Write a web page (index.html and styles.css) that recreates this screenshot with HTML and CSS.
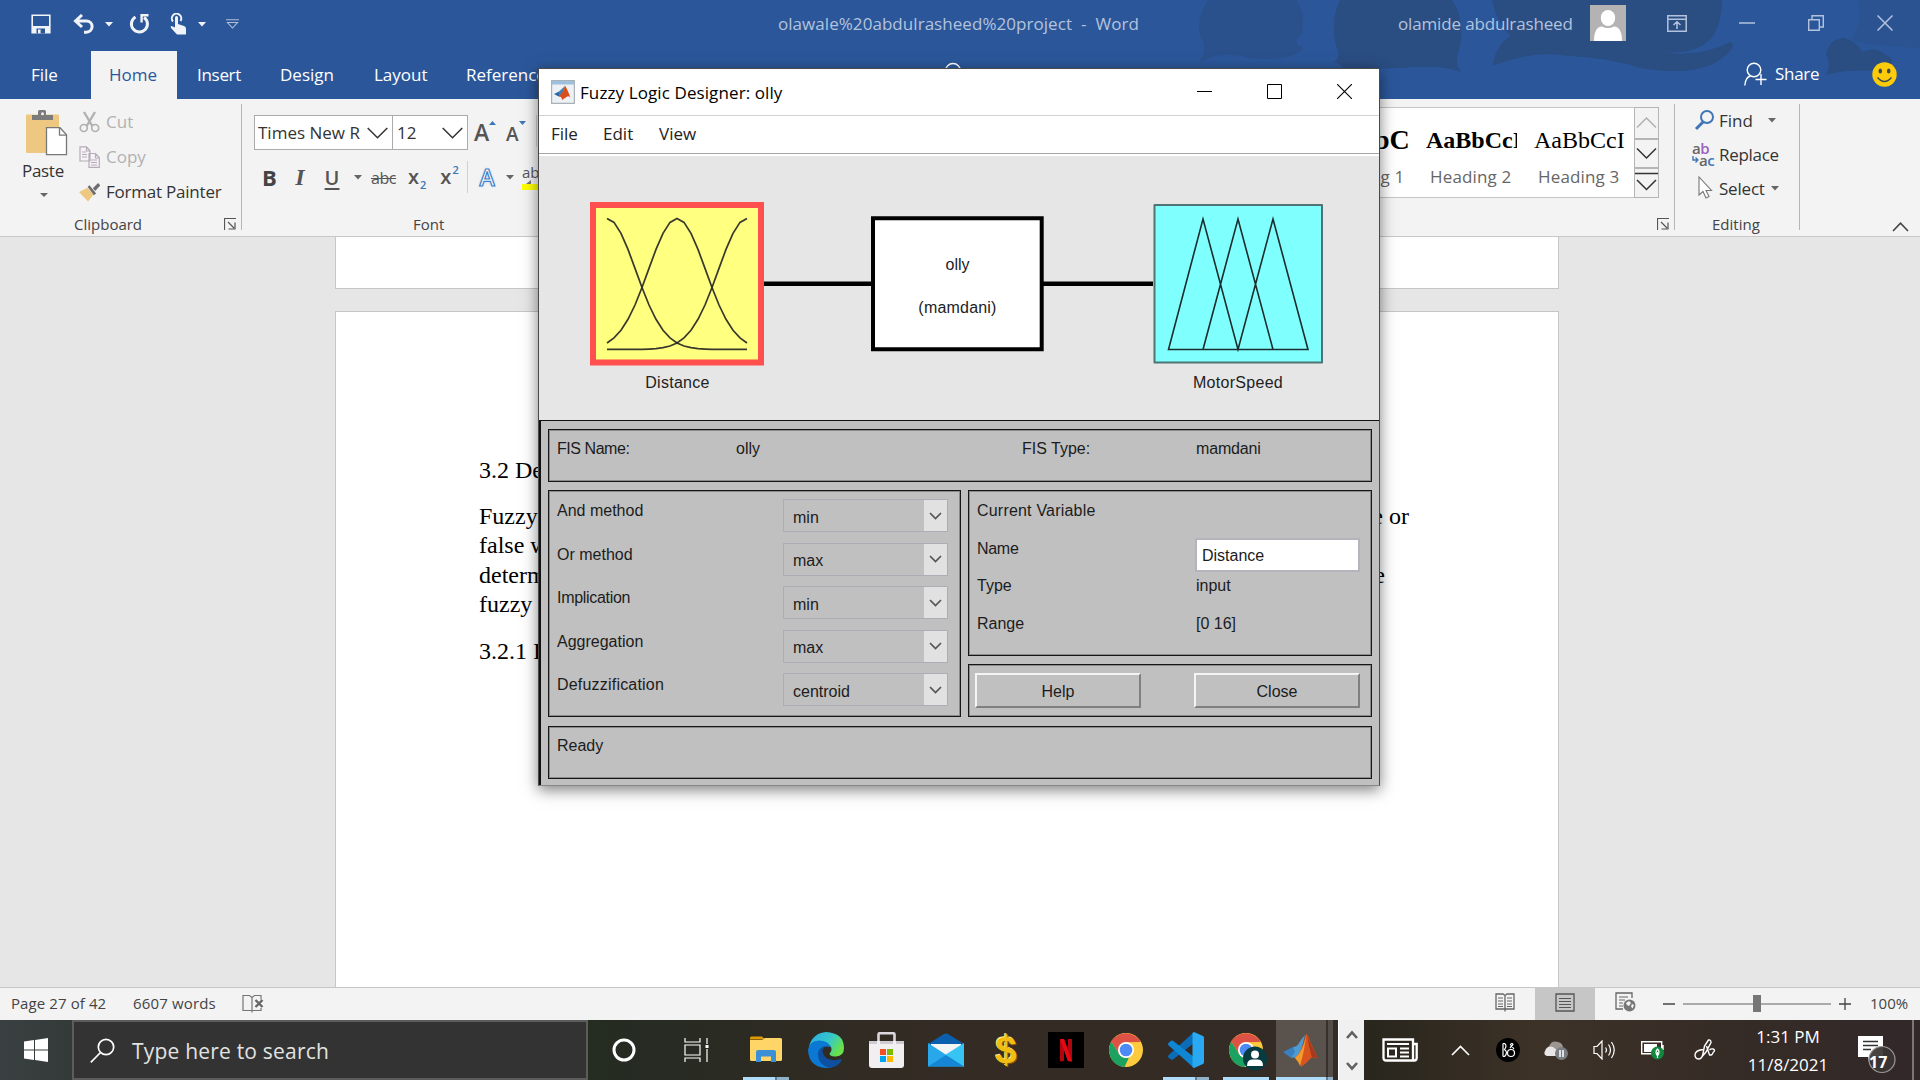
FILE: index.html
```html
<!DOCTYPE html>
<html lang="en">
<head>
<meta charset="utf-8">
<title>olawale%20abdulrasheed%20project - Word</title>
<link rel="stylesheet" href="styles.css">
</head>
<body>
<div class="desktop">

<header class="word-head">
  <svg class="head-art" width="740" height="99" viewBox="1180 0 740 99">
    <g fill="#2a4d82">
      <path d="M1208 0 Q1196 18 1200 36 Q1208 46 1200 62 Q1222 50 1250 58 Q1292 62 1304 48 Q1290 44 1302 34 Q1306 12 1296 0Z" opacity=".55"/>
      <path d="M1340 0 Q1330 20 1336 46 Q1342 56 1334 62 Q1340 62 1346 72 Q1380 68 1400 68 Q1440 64 1461 72 Q1454 62 1459 50 Q1466 20 1452 0Z"/>
      <path d="M1492 0 Q1496 20 1510 36 Q1494 48 1493 66 Q1530 50 1570 56 Q1610 58 1640 68 Q1700 78 1725 56 Q1738 44 1730 42 Q1700 58 1660 52 Q1700 56 1714 34 Q1722 20 1722 0Z"/>
      <path d="M1826 75 Q1832 64 1826 54 Q1830 38 1844 38 Q1858 42 1862 52 Q1876 46 1884 54 Q1900 60 1884 72 Q1850 68 1826 75Z"/>
      <path d="M1858 0 Q1862 30 1850 40 Q1870 46 1920 48 L1920 0Z" opacity=".35"/>
    </g>
  </svg>
  <div class="titlebar">
    <div class="qat">
      <svg width="20" height="20" viewBox="0 0 20 20"><path d="M1.2 1.2h17.6v17.6H1.2z" fill="none" stroke="#f0f3f8" stroke-width="1.6"/><path d="M1 12h18v7H1z" fill="#f0f3f8"/><path d="M5.5 14.5h8.5v5H5.500z" fill="#2b579a"/><path d="M7 15.500h2.600v3.800H7z" fill="#f0f3f8"/></svg>
      <svg class="undo" width="22" height="20" viewBox="0 0 22 20"><path d="M9 1 2.500 7 9 13M3 7h10.500a5.600 5.600 0 0 1 0 11.200H11" fill="none" stroke="#f0f3f8" stroke-width="3"/></svg>
      <svg class="dd" width="8" height="5"><path d="M0 0h8L4 4.500z" fill="#f0f3f8"/></svg>
      <svg class="redo" width="21" height="20" viewBox="0 0 21 20"><path d="M6.500 3A8 8 0 1 0 15 3.400" fill="none" stroke="#f0f3f8" stroke-width="3"/><path d="M12 1.200h7.500M12.600 0v8.500" fill="none" stroke="#f0f3f8" stroke-width="2.400"/></svg>
      <svg class="touch" width="17" height="22" viewBox="0 0 17 22"><path d="M3 8.500A4.700 4.700 0 1 1 10.500 8" fill="none" stroke="#f0f3f8" stroke-width="2"/><path d="M5 4.500q0-1.500 1.500-1.500T8 4.500V11l6 2q2 .6 2 3v5.500H7L1 15q-1-1.500.5-2L5 14.500z" fill="#f0f3f8"/></svg>
      <svg class="dd dd2" width="8" height="5"><path d="M0 0h8L4 4.500z" fill="#f0f3f8"/></svg>
      <svg class="cust" width="13" height="10"><path d="M0 .7h13M1.500 3.500h10L6.500 9z" fill="none" stroke="#aebfda" stroke-width="1.100"/></svg>
    </div>
    <span class="doc-title">olawale%20abdulrasheed%20project &nbsp;-&nbsp; Word</span>
    <div class="account">
      <span class="user-name">olamide abdulrasheed</span>
      <svg class="avatar" width="36" height="36" viewBox="0 0 36 36"><path fill="#b3b3b3" d="M0 0h36v36H0z"/><ellipse cx="18" cy="13" rx="7.200" ry="8" fill="#fff"/><path d="M4 36q0-14 8-14.500 6 3 12 0 8 .5 8 14.500z" fill="#fff"/></svg>
      <svg class="w1" width="20" height="17" viewBox="0 0 20 17"><path d="M.8.8h18.400v15.400H.8zM.8 4.200h18.400M10 14V7M6.500 10 10 6.800l3.500 3.200" fill="none" stroke="#b3c3dd" stroke-width="1.500"/></svg>
      <svg class="w2" width="16" height="2"><path d="M0 1h16" stroke="#b3c3dd" stroke-width="1.500"/></svg>
      <svg class="w3" width="16" height="16" viewBox="0 0 16 16"><path d="M.7 4.700h10.600v10.600H.7zM4 4.500V.7h11.300V12h-3.600" fill="none" stroke="#b3c3dd" stroke-width="1.400"/></svg>
      <svg class="w4" width="16" height="16"><path d="M.5.5l15 15M15.500.5l-15 15" stroke="#b3c3dd" stroke-width="1.500"/></svg>
    </div>
  </div>
  <nav class="tabs">
    <span class="tab t-file">File</span>
    <span class="tab t-home">Home</span>
    <span class="tab t-insert">Insert</span>
    <span class="tab t-design">Design</span>
    <span class="tab t-layout">Layout</span>
    <span class="tab t-ref">References</span>
    <span class="tab t-mail">Mailings</span>
    <span class="tab t-rev">Review</span>
    <span class="tab t-view">View</span>
    <span class="tab t-help">Help</span>
    <svg class="bulb" width="18" height="24"><circle cx="9" cy="9" r="7.500" fill="none" stroke="#fff" stroke-width="1.400"/></svg>
    <span class="tab t-tell">Tell me what you want to do</span>
    <div class="share">
      <svg width="23" height="24" viewBox="0 0 23 24"><circle cx="10" cy="8" r="6.800" fill="none" stroke="#fff" stroke-width="1.400"/><path d="M.8 23.500Q1.500 15 6.500 14M17 12v11M11.500 17.500h11" fill="none" stroke="#fff" stroke-width="1.400"/></svg>
      <span class="share-label">Share</span>
      <svg class="smile" width="25" height="25" viewBox="0 0 25 25"><circle cx="12.500" cy="12.500" r="12.200" fill="#fccc0a"/><ellipse cx="8.300" cy="9" rx="1.800" ry="2.500" fill="#3c4a50"/><ellipse cx="16.700" cy="9" rx="1.800" ry="2.500" fill="#3c4a50"/><path d="M5.500 15.500q7 8 14 0" fill="none" stroke="#3c4a50" stroke-width="1.500"/></svg>
    </div>
  </nav>
</header>

<section class="ribbon">
  <div class="group clipboard">
    <div class="group-body">
      <div class="paste">
        <svg width="42" height="46" viewBox="0 0 42 46"><path d="M0 5.500q0-1 1-1h31q1 0 1 1V18H20v25H1q-1 0-1-1z" fill="#eec880"/><path d="M6 10V5h6V1.500Q12 0 13.500 0h5Q20 0 20 1.500V5h7v5z" fill="#7b7b7b"/><circle cx="16.500" cy="3.700" r="1.500" fill="#f3f3f3"/><path d="M20.500 17.700H34l6.500 7v20H20.500z" fill="#fff" stroke="#777" stroke-width="1.300"/><path d="M33.500 17.700v7.500h7" fill="none" stroke="#777" stroke-width="1.300"/></svg>
        <span class="paste-label">Paste</span>
        <svg width="8" height="5"><path d="M0 0h8L4 4z" fill="#666"/></svg>
      </div>
      <div class="clip-list">
        <div class="clip-row off"><svg width="20" height="22" viewBox="0 0 20 22"><path d="M4.500 1 12.800 15M15.500 1 7.200 15" stroke="#b1b1b1" stroke-width="2.400" fill="none"/><circle cx="4.300" cy="17" r="3.500" fill="none" stroke="#b1b1b1" stroke-width="1.700"/><circle cx="15.700" cy="17" r="3.500" fill="none" stroke="#b1b1b1" stroke-width="1.700"/></svg><span>Cut</span></div>
        <div class="clip-row off"><svg width="21" height="22" viewBox="0 0 21 22"><path d="M1 .8h6.500l3.500 4V15H1zM7.500.8V5H11M10 7.500h6.500l3.800 4v9.800H10zM16.500 7.500V12h3.800" fill="#f6f2f8" stroke="#b5acb8" stroke-width="1.200"/><path d="M3 6h4M3 8.500h5M3 11h5M12 14h6M12 16.500h6M12 19h6" stroke="#b5acb8" stroke-width="1"/></svg><span>Copy</span></div>
        <div class="clip-row"><svg width="22" height="20" viewBox="0 0 22 20"><path d="M0 10 9 5.500 15 13 9.500 20Z" fill="#eec880"/><path d="m9 4.500 2-1.500 7 8.500-2.500 2zM14.500 6 20 0.500l2.300 2.600L17 9z" fill="#6f6f6f"/></svg><span class="fp">Format Painter</span></div>
      </div>
    </div>
    <div class="group-foot"><span class="foot-clip">Clipboard</span><svg class="launch" width="12" height="12"><path d="M.5 12V.5H12M4 4l6 6M11 4.500V11H4.500" fill="none" stroke="#555" stroke-width="1.200"/></svg></div>
  </div>
  <div class="rule"></div>
  <div class="group font">
    <div class="font-row1">
      <div class="combo combo-font"><span>Times New R</span><svg width="21" height="12"><path d="M.7 1 10.500 10.700 20.300 1" fill="none" stroke="#333" stroke-width="1.500"/></svg></div>
      <div class="combo combo-size"><span>12</span><svg width="21" height="12"><path d="M.7 1 10.500 10.700 20.300 1" fill="none" stroke="#333" stroke-width="1.500"/></svg></div>
      <div class="grow"><b class="gA">A</b><svg width="7" height="4"><path d="M0 4h7L3.500 0z" fill="#3a76b8"/></svg></div>
      <div class="grow shrink"><b class="gA">A</b><svg width="7" height="4"><path d="M0 0h7L3.500 4z" fill="#3a76b8"/></svg></div>
      <div class="sep sep-a"></div>
    </div>
    <div class="font-row2">
      <b class="f-b">B</b><i class="f-i">I</i><span class="f-u">U</span>
      <svg class="f-dd" width="8" height="5"><path d="M0 0h8L4 4.500z" fill="#666"/></svg>
      <span class="f-abc">abc</span>
      <span class="f-x">x<sub>2</sub></span><span class="f-x f-sup">x<sup>2</sup></span>
      <div class="sep sep-b"></div>
      <span class="f-fx">A</span>
      <svg class="f-dd2" width="8" height="5"><path d="M0 0h8L4 4.500z" fill="#666"/></svg>
      <div class="f-hl"><span>ab</span><svg width="20" height="10"><path d="M4 4 9 0v4z" fill="#777"/><path fill="#ff0" d="M0 4h20v6H0z"/></svg></div>
    </div>
    <div class="group-foot"><span class="foot-font">Font</span></div>
  </div>
  <div class="group styles">
    <div class="gallery-wrap">
      <div class="gallery">
        <div class="style s1"><span class="sample">AaBbC</span><span class="style-name">Heading 1</span></div>
        <div class="style s2"><span class="sample">AaBbCcI</span><span class="style-name">Heading 2</span></div>
        <div class="style s3"><span class="sample">AaBbCcI</span><span class="style-name">Heading 3</span></div>
      </div>
      <div class="gal-scroll">
        <svg width="25" height="32"><path d="M3 20.500 12.500 11 22 20.500" fill="none" stroke="#b0b0b0" stroke-width="1.500"/></svg>
        <svg width="25" height="29"><path d="M3 9.500 12.500 19 22 9.500" fill="none" stroke="#333" stroke-width="1.500"/></svg>
        <svg width="25" height="30"><path d="M1 5.500h23M3 12 12.500 21.500 22 12" fill="none" stroke="#333" stroke-width="1.500"/></svg>
      </div>
    </div>
    <div class="group-foot"><svg class="launch" width="12" height="12"><path d="M.5 12V.5H12M4 4l6 6M11 4.500V11H4.500" fill="none" stroke="#555" stroke-width="1.200"/></svg></div>
  </div>
  <div class="rule"></div>
  <div class="group editing">
    <div class="edit-list">
      <div class="edit-row"><svg width="22" height="22" viewBox="0 0 22 22"><circle cx="13" cy="8" r="6" fill="none" stroke="#3f76b5" stroke-width="2"/><path d="M9 13 2 20" stroke="#3f76b5" stroke-width="3"/></svg><span class="e-find">Find</span><svg class="e-dd" width="8" height="5"><path d="M0 0h8L4 4.500z" fill="#666"/></svg></div>
      <div class="edit-row"><div class="ab-icon"><span>a<em>b</em></span><span class="ab2"><svg width="7" height="8"><path d="M1 0v4h4M3.500 1.500 6 4 3.500 6.500" fill="none" stroke="#3f76b5" stroke-width="1.400"/></svg>a<u>c</u></span></div><span class="e-rep">Replace</span></div>
      <div class="edit-row"><svg width="22" height="24" viewBox="0 0 22 24"><path d="M5 1v18l4-3.500L12 22l3-1.500-3-6h5.500z" fill="#fff" stroke="#777" stroke-width="1.100"/></svg><span class="e-sel">Select</span><svg class="e-dd3" width="8" height="5"><path d="M0 0h8L4 4.500z" fill="#666"/></svg></div>
    </div>
    <div class="group-foot"><span class="foot-edit">Editing</span></div>
  </div>
  <div class="rule"></div>
  <svg class="collapse" width="17" height="11"><path d="M1 10 8.500 2.200 16 10" fill="none" stroke="#444" stroke-width="1.600"/></svg>
</section>

<main class="doc">
  <div class="page page-prev"></div>
  <div class="page page-cur">
    <div class="line head1"><span>3.2 Des</span></div>
    <div class="line"><span>Fuzzy l</span><span>e or</span></div>
    <div class="line"><span>false wa</span></div>
    <div class="line short"><span>determi</span><span>e</span></div>
    <div class="line"><span>fuzzy</span></div>
    <div class="line head2"><span>3.2.1 In</span></div>
  </div>
</main>

<footer class="status">
  <span class="st-page">Page 27 of 42</span>
  <span class="st-words">6607 words</span>
  <svg class="st-proof" width="22" height="19" viewBox="0 0 22 19"><path d="M9.500 16.500H1v-15h6.500l2.500 2 2.500-2H19v4M10 3v15.500M19 14v2.500h-8.500" fill="none" stroke="#767676" stroke-width="1.200"/><path d="m13.500 6 7 7M20.500 6l-7 7" stroke="#666" stroke-width="2.400"/></svg>
  <div class="st-right">
    <div class="view-btn"><svg width="20" height="19" viewBox="0 0 20 19"><path d="M1 1h7l2 1.500L12 1h7v15H1zM10 2v16.500" fill="none" stroke="#666" stroke-width="1.300"/><path d="M3 5h5M3 8h5M3 11h5M12 5h5M12 8h5M12 11h5M3 13.500h5M12 13.500h5" stroke="#666"/></svg></div>
    <div class="view-btn sel"><svg width="20" height="19" viewBox="0 0 20 19"><path d="M1 1h18v17H1z" fill="none" stroke="#555" stroke-width="1.300"/><path d="M4 5.500h12M4 8.500h12M4 11.500h12M4 14.500h12" stroke="#555"/></svg></div>
    <div class="view-btn"><svg width="21" height="20" viewBox="0 0 21 20"><path d="M8 17H1V1h16v5" fill="none" stroke="#666" stroke-width="1.300"/><path d="M4 5h9M4 8h6M4 11h4M4 14h4" stroke="#666"/><circle cx="14.500" cy="13.500" r="6" fill="#777"/><path d="m11 11 3-2 2 2-2 3-2-1zM17 12l2 1-1.500 3.500-1.500-2z" fill="#f3f3f3"/></svg></div>
    <svg class="minus" width="12" height="2"><path d="M0 1h12" stroke="#444" stroke-width="1.500"/></svg>
    <div class="slider"><div class="thumb"></div></div>
    <svg class="plus" width="12" height="12"><path d="M0 6h12M6 0v12" stroke="#444" stroke-width="1.300"/></svg>
    <span class="zoom">100%</span>
  </div>
</footer>

<footer class="taskbar">
  <div class="start"><svg width="24" height="24" viewBox="0 0 24 24"><path d="M0 3.500 10 2v9.500H0zM11 1.900 24 0v11.500H11zM0 12.500h10V22L0 20.500zM11 12.500h13V24l-13-1.900z" fill="#fff"/></svg></div>
  <div class="search"><svg width="25" height="25" viewBox="0 0 25 25"><circle cx="16" cy="9" r="7.700" fill="none" stroke="#fff" stroke-width="1.700"/><path d="M10.500 14.500.8 24.300" stroke="#fff" stroke-width="1.700"/></svg><span>Type here to search</span></div>
  <div class="cell c72"><svg width="24" height="24"><circle cx="12" cy="12" r="10" fill="none" stroke="#fff" stroke-width="3"/></svg></div>
  <div class="cell c76"><svg width="25" height="24" viewBox="0 0 25 24"><path d="M1 0v4h15V0M1 7h15v10H1zM1 24v-4h15v4M23 0v6M23 11v13" fill="none" stroke="#fff" stroke-width="1.200"/><path d="M21.500 7h3v3h-3z" fill="#fff"/></svg></div>
  <div class="cell run stack"><svg width="32" height="28" viewBox="0 0 32 28"><path d="M0 2q0-1.500 1.500-1.500H12l3 3H0z" fill="#e09a00"/><path d="M0 4h12l3-2h15.500Q32 2 32 3.500v20q0 1.500-1.500 1.500h-29Q0 25 0 23.500z" fill="#ffd568"/><path d="M6 16q0-2 2-2h16q2 0 2 2v10h-5v-5.500H11V26H6z" fill="#3b90d8"/></svg></div>
  <div class="cell"><svg width="36" height="36" viewBox="0 0 36 36"><defs><linearGradient id="e1" x1="0" y1="0" x2="1" y2=".5"><stop offset=".1" stop-color="#2aaee0"/><stop offset=".6" stop-color="#36c8c8"/><stop offset="1" stop-color="#68e14a"/></linearGradient></defs><path d="M1 15A18 18 0 0 1 18 0q18 1 18 16 0 8-8 8.500-6 .5-6.500-3 3-3 1.500-6.500Q16 6 1 15z" fill="url(#e1)"/><path d="M0 18Q1 9 11 8.500q9 0 12.500 7-10-4-10 6.500 1 10 12 9.500 4-.5 8-3Q28 36 18 36 1 35 0 18z" fill="#0b78d4"/><path d="M10 22q0-7 9-8.500-7 3-3 10 5 7 18 3.500-4 9-13 8.500Q10 33 10 22z" fill="#0f4fa0"/></svg></div>
  <div class="cell"><svg width="35" height="36" viewBox="0 0 35 36"><path d="M9.500 13V2.500Q9.500 1.200 11 1.200h13q1.500 0 1.500 1.300V13" fill="none" stroke="#ddd8de" stroke-width="2.600"/><path d="M0 9h35v24q0 3-3 3H3q-3 0-3-3z" fill="#f1eff2"/><path d="M0 9h8v3H0zM27 9h8v3h-8zM11 9h13v3H11z" fill="#cfcad2"/><path d="M11 17h6v6h-6z" fill="#f25022"/><path d="M18 17h6v6h-6z" fill="#7fba00"/><path d="M11 24h6v6h-6z" fill="#00a4ef"/><path d="M18 24h6v6h-6z" fill="#ffb900"/></svg></div>
  <div class="cell"><svg width="36" height="34" viewBox="0 0 36 34"><path d="M0 11 16 1q2-1 4 0l16 10v4H0z" fill="#0b5fae"/><path d="M3 11h30v9L18 24 3 20z" fill="#f4f4f4"/><path d="m0 10 36 23.500H0z" fill="#28a8ea"/><path d="M36 10v24L17 22z" fill="#35c4f4"/><path d="M0 33.500 18 22l18 11.500z" fill="#1585d4"/></svg></div>
  <div class="cell"><span class="dollar">$</span></div>
  <div class="cell"><svg width="36" height="36" viewBox="0 0 36 36"><path d="M0 0h36v36H0z"/><path d="M12 7h4v22l-4 .5zM20 7h4v22.500l-4-.5z" fill="#b1060f"/><path d="M12 7h4.200L24 29.500l-4.200-.5z" fill="#e50914"/></svg></div>
  <div class="cell"><svg width="34" height="34" viewBox="0 0 34 34"><g id="chr"><circle cx="17" cy="17" r="17" fill="#fdcb3d"/><path d="M2.300 8.500A17 17 0 0 1 31.700 9L17 9.300 10 21z" fill="#de5246"/><path d="M2.300 8.500 10 21q4 5 10 3.500L15.500 34A17 17 0 0 1 2.300 8.500z" fill="#1ba260"/><circle cx="17" cy="17" r="8" fill="#fff"/><circle cx="17" cy="17" r="6.300" fill="#4c8bf5"/></g></svg></div>
  <div class="cell run stack"><svg width="36" height="36" viewBox="0 0 36 36"><path d="M26 0v11L5 27.500q-1 .5-2 0l-2.500-2q-1-1.200 0-2.200z" fill="#0b6cb8"/><path d="M26 36V25L5 8.800q-1-.5-2 0L.5 11q-1 1.200 0 2.200z" fill="#0f86d4"/><path d="M26 0l9 4q1 .5 1 2v24q0 1.500-1 2l-9 4-1.500-1V1z" fill="#29a9f2"/></svg></div>
  <div class="cell run"><svg width="38" height="38" viewBox="0 0 38 38" class="chr2"><use href="#chr"/><circle cx="26" cy="25.500" r="12" fill="#063b40"/><circle cx="26" cy="21.500" r="4" fill="#fff"/><path d="M18 33q0-6.500 5-6.500h6q5 0 5 6.500z" fill="#fff"/></svg></div>
  <div class="cell run stack active"><svg width="36" height="33" viewBox="0 0 36 33"><path d="m0 18 10-5 5 4-7 7q-4-3-8-6z" fill="#3a7fc0"/><path d="M10 13q4 0 6-4 3-5 6-8l-4 16-4 7q-4-1-6 0l4-6z" fill="#4d9bd0"/><path d="M23 0q2 0 4 7l8 18q-4-3-7-1-4 5-10 9-1-6-6-9 7-6 11-24z" fill="#d9531e"/><path d="M23 1q-1 14-6 31-2-5-5-8 8-6 11-23z" fill="#f39a2a"/><path d="M24 1q4 10 11 24-4-3-6-1-3-10-5-23z" fill="#a83a1c"/></svg></div>
  <div class="band-scroll">
    <svg width="12" height="9"><path d="M1 8 6 2.500 11 8" fill="none" stroke="#606060" stroke-width="2.600"/></svg>
    <svg width="12" height="9"><path d="M1 1l5 5.500L11 1" fill="none" stroke="#606060" stroke-width="2.600"/></svg>
  </div>
  <div class="tray t72"><svg width="36" height="24" viewBox="0 0 36 24"><path d="M31 22.500H4q-2.500 0-2.500-2.500V1.500H31zM31 6h3.700v14q0 2.500-2.500 2.500H29" fill="none" stroke="#fff" stroke-width="2.300"/><path d="M5 6h22M18 10.500h9M18 14.500h9M18 18.500h9M6 10.500h8v8H6z" fill="none" stroke="#fff" stroke-width="2"/></svg></div>
  <div class="tray"><svg width="19" height="11"><path d="M1 10 9.500 1.500 18 10" fill="none" stroke="#fff" stroke-width="1.600"/></svg></div>
  <div class="tray"><svg width="24" height="24" viewBox="0 0 24 24"><circle cx="12" cy="12" r="12" fill="#000"/><path d="M7 5.500v13M7 5.500h1.500q3 2 0 6 4 3 0 7H7M18 11l-3.500-4.500q1.500-2.500 2.500 0L14 10" fill="none" stroke="#fff" stroke-width="1.200"/><circle cx="15" cy="15" r="3.500" fill="none" stroke="#fff" stroke-width="1.200"/></svg></div>
  <div class="tray"><svg width="24" height="22" viewBox="0 0 24 22"><path d="M5 8q2-7 9-5 5 1 5 6l-6 3z" fill="#9b9692"/><path d="M1 12q2-6 8-4l5 4-2 5H3q-4-1-2-5z" fill="#e8e6e4"/><circle cx="17.500" cy="14.500" r="6.500" fill="#7a7e82"/><path d="M16 11v7M19 11v7" stroke="#fff" stroke-width="1.500"/></svg></div>
  <div class="tray"><svg width="22" height="20" viewBox="0 0 22 20"><path d="M1 6.500h3L9 1v18l-5-5.500H1z" fill="none" stroke="#fff" stroke-width="1.200"/><path d="M12.500 7.500q2 2.500 0 5M15.500 4.500q4 5.500 0 11M18.500 2q5.500 8 0 16" fill="none" stroke="#fff" stroke-width="1.200"/></svg></div>
  <div class="tray"><svg width="23" height="20" viewBox="0 0 23 20"><path d="M.7 1.700h20v12H.7zM22 5v5" fill="none" stroke="#fff" stroke-width="1.400"/><path d="M3 4h13v8H3z" fill="#fff"/><circle cx="16.500" cy="13" r="6.500" fill="#10893e"/><path d="M16.500 9q-3 3 0 7 3-4 0-7zM16.500 12v6" fill="none" stroke="#fff" stroke-width="1.200"/></svg></div>
  <div class="tray t58"><svg width="22" height="22" viewBox="0 0 22 22"><path d="M8.500 17 10.500 7l4-6q2.500-.5 2.500 2.500L12 13zM10 10.500q-9 .5-9 5.500 0 3.500 3.500 4 3 0 4-3.500M12.500 7l3 9q3 .5 3.500-2.500 3-2.500 0-3.500-2-.5-3.500 1" fill="none" stroke="#fff" stroke-width="1.400"/></svg></div>
  <div class="clock"><span class="time">1:31 PM</span><span class="date">11/8/2021</span></div>
  <div class="tray notif"><svg width="40" height="38" viewBox="0 0 40 38"><path d="M0 0h25v21H15l-4 5-1-5H0z" fill="#fff"/><path d="M5 5.500h15M5 9.500h15M5 13.500h8" stroke="#333" stroke-width="1.300"/><circle cx="24" cy="23.500" r="13" fill="#3a3531" fill-opacity=".93" stroke="#9a9896" stroke-width="1.200"/></svg><b>17</b></div>
  <div class="peek"></div>
</footer>

<div class="dialog">
  <div class="d-title">
    <svg width="24" height="24" viewBox="0 0 24 24"><path d="M.6.600h22.800v22.800H.6z" fill="#eef1f4" stroke="#a9b1b9" stroke-width="1.200"/><path d="M1 1h22v3.500H1z" fill="#9cc0dd"/><path d="m3 14 5-2.500 3 2-3.500 3z" fill="#2a69a5"/><path d="M8 11.500 14 6l-3 9-3 2z" fill="#3f83bb"/><path d="M14 5.500q2 3 5.500 12-2-2-4-.5L11 20q0-3-3-4 4-3 6-10.500z" fill="#d84f1c"/></svg>
    <span class="d-name">Fuzzy Logic Designer: olly</span>
    <div class="d-btns">
      <svg width="15" height="1"><path d="M0 .5h15" stroke="#000"/></svg>
      <svg width="15" height="15"><path d="M.5.500h14v14H.5z" fill="none" stroke="#000"/></svg>
      <svg width="15" height="15"><path d="M0 0l15 15M15 0 0 15" stroke="#000" stroke-width="1.100"/></svg>
    </div>
  </div>
  <div class="d-menu"><span class="m1">File</span><span class="m2">Edit</span><span class="m3">View</span></div>
  <svg class="d-canvas" width="840" height="264" viewBox="539 156 840 264">
    <path d="M764 283.700h108M1043 283.700h110" stroke="#000" stroke-width="4.400"/>
    <path d="M593 205h168v157.500H593z" fill="#ffff80" stroke="#ff4f4f" stroke-width="6"/>
    <g fill="none" stroke="#222" stroke-opacity=".9" stroke-width="1.700">
      <g transform="translate(607 218.500)">
        <path d="M0 0 7 3.900 14 14.800 21 30.900 28 49.900 35 69 42 86.500 49 100.800 56 111.700 63 119.400 70 124.500 77 127.500 84 129.200 91 130.200 98 130.600 105 130.900H140"/>
        <path d="M140 0 133 3.900 126 14.800 119 30.900 112 49.900 105 69 98 86.500 91 100.800 84 111.700 77 119.400 70 124.500 63 127.500 56 129.200 49 130.200 42 130.600 35 130.900H0"/>
        <path d="M0 124.500 7 119.400 14 111.700 21 100.800 28 86.500 35 69 42 49.900 49 30.900 56 14.800 63 3.900 70 0 77 3.900 84 14.800 91 30.900 98 49.900 105 69 112 86.500 119 100.800 126 111.700 133 119.400 140 124.500"/>
      </g>
    </g>
    <path d="M873 218.300h168.700v131H873z" fill="#fff" stroke="#000" stroke-width="4"/>
    <path d="M1154.500 205h167.500v157.500h-167.500z" fill="#80ffff" stroke="#4f7272" stroke-width="2" stroke-linejoin="round"/>
    <path d="M1168.500 349.500 1203 219l35 130.500L1273 219l35 130.500zM1203 349.500 1238 219l35 130.500" fill="none" stroke="#1c2c2c" stroke-width="1.600"/>
    <g font-family="Liberation Sans, Arial, sans-serif" font-size="16" fill="#222" text-anchor="middle">
      <text x="957.500" y="269.500">olly</text>
      <text x="957.500" y="313" letter-spacing=".2">(mamdani)</text>
      <text x="677.500" y="388" letter-spacing=".3">Distance</text>
      <text x="1238" y="388" letter-spacing=".3">MotorSpeed</text>
    </g>
  </svg>
  <div class="d-panel">
    <div class="frame fis"><span class="f1">FIS Name:</span><span class="f2">olly</span><span class="f3">FIS Type:</span><span class="f4">mamdani</span></div>
    <div class="mid">
      <div class="frame methods">
        <div class="mrow"><span>And method</span><div class="sel"><span>min</span><i><svg width="13" height="8"><path d="M1 1l5.500 5.500L12 1" fill="none" stroke="#555" stroke-width="1.700"/></svg></i></div></div>
        <div class="mrow"><span>Or method</span><div class="sel"><span>max</span><i><svg width="13" height="8"><path d="M1 1l5.500 5.500L12 1" fill="none" stroke="#555" stroke-width="1.700"/></svg></i></div></div>
        <div class="mrow"><span class="tight">Implication</span><div class="sel"><span>min</span><i><svg width="13" height="8"><path d="M1 1l5.500 5.500L12 1" fill="none" stroke="#555" stroke-width="1.700"/></svg></i></div></div>
        <div class="mrow"><span>Aggregation</span><div class="sel"><span>max</span><i><svg width="13" height="8"><path d="M1 1l5.500 5.500L12 1" fill="none" stroke="#555" stroke-width="1.700"/></svg></i></div></div>
        <div class="mrow"><span class="loose">Defuzzification</span><div class="sel"><span>centroid</span><i><svg width="13" height="8"><path d="M1 1l5.500 5.500L12 1" fill="none" stroke="#555" stroke-width="1.700"/></svg></i></div></div>
      </div>
      <div class="right">
        <div class="frame variable">
          <div class="vrow"><span class="loose">Current Variable</span></div>
          <div class="vrow"><span class="tight">Name</span><div class="field"><span>Distance</span></div></div>
          <div class="vrow"><span>Type</span><span>input</span></div>
          <div class="vrow"><span>Range</span><span>[0 16]</span></div>
        </div>
        <div class="frame buttons"><div class="btn">Help</div><div class="btn">Close</div></div>
      </div>
    </div>
    <div class="frame ready"><span>Ready</span></div>
  </div>
</div>

</div>
</body>
</html>
```
FILE: styles.css
```css
* { box-sizing: border-box; }
body { margin: 0; font-family: "Open Sans", "Noto Sans", sans-serif; background: #e6e6e6; }
svg { display: block; flex: none; }
span, b, i { white-space: nowrap; }
.desktop { width: 1920px; height: 1080px; position: relative; overflow: hidden; display: flex; flex-direction: column; }

/* title bar and tabs */
.word-head { height: 99px; background: #2b579a; position: relative; flex: none; }
.head-art { position: absolute; right: 0; top: 0; }
.titlebar { position: relative; height: 51px; display: flex; padding-bottom: 5px; align-items: center; justify-content: space-between; }
.qat { display: flex; align-items: center; padding: 2px 0 0 31px; width: 778px; }
.undo { margin-left: 22px; }
.dd { margin-left: 10px; }
.redo { margin-left: 16px; }
.touch { margin-left: 20px; }
.dd2 { margin-left: 11px; }
.cust { margin-left: 20px; }
.doc-title, .user-name { font-size: 17px; color: #b3c3dd; }
.doc-title { width: 620px; letter-spacing: .05px; }
.account { display: flex; align-items: center; width: 522px; }
.user-name { width: 192px; letter-spacing: -.15px; }
.w1 { margin-left: 41px; }
.w2 { margin-left: 52px; }
.w3 { margin-left: 53px; }
.w4 { margin-left: 53px; }
.tabs { position: relative; height: 48px; display: flex; align-items: center; color: #fff; font-size: 17px; }
.tab { padding-bottom: 2px; }
.t-file { width: 91px; padding-left: 31px; }
.tab.t-home { width: 86px; height: 48px; line-height: 47px; background: #f3f3f3; color: #2b579a; padding: 0 0 0 18px; }
.t-insert { width: 103px; padding-left: 20px; letter-spacing: -.3px; }
.t-design { width: 94px; }
.t-layout { width: 92px; }
.t-ref { width: 123px; }
.t-mail { width: 105px; }
.t-rev { width: 93px; }
.t-view { width: 77px; }
.t-help { width: 80px; }
.bulb { width: 36px; margin-bottom: 2px; }
.share { margin-left: auto; width: 176px; display: flex; align-items: center; padding-bottom: 2px; }
.share-label { margin-left: 8px; width: 97px; letter-spacing: -.3px; padding-bottom: 2px; }

/* ribbon */
.ribbon { height: 138px; flex: none; background: #f3f3f3; border-bottom: 1px solid #c8c8c8; display: flex; color: #333; font-size: 17px; }
.group { display: flex; flex-direction: column; height: 137px; }
.group-foot { height: 24px; margin-top: auto; display: flex; align-items: center; font-size: 15px; color: #444; }
.rule { width: 1px; height: 126px; margin-top: 5px; background: #b5b5b5; flex: none; }
.clipboard { width: 241px; }
.group-body { display: flex; }
.paste { width: 79px; padding: 11px 0 0 22px; }
.paste > svg:first-child { margin-left: 4px; }
.paste-label { display: block; line-height: 24px; margin-top: 3px; letter-spacing: -.3px; }
.paste > svg:last-child { margin: 10px 0 0 18px; }
.clip-list { padding-top: 5px; }
.clip-row { height: 35px; display: flex; align-items: center; }
.clip-row span { margin-left: 6px; padding-bottom: 1px; }
.clip-row .fp { letter-spacing: -.22px; }
.clip-row svg { width: 21px; }
.off { color: #b1b1b1; }
.foot-clip { width: 150px; margin-left: 74px; }
.font { width: 300px; padding-left: 12px; }
.font-row1 { display: flex; margin-top: 16px; height: 35px; }
.combo { border: 1px solid #ababab; background: #fff; display: flex; align-items: center; justify-content: space-between; padding: 0 4px 0 3px; }
.combo-font { width: 139px; }
.combo-size { width: 76px; margin-left: -1px; padding-left: 4px; }
.grow { display: flex; margin-left: 6px; color: #555; }
.gA { font-size: 23px; line-height: 35px; width: 15px; font-weight: 600; }
.grow svg { margin-top: 6px; }
.shrink .gA { font-size: 19px; line-height: 38px; width: 13px; }
.shrink { margin-left: 10px; }
.sep { width: 1px; background: #d0d0d0; height: 32px; }
.sep-a { margin-left: 10px; }
.font-row2 { display: flex; align-items: center; height: 36px; margin-top: 9px; color: #555; }
.f-b { font-size: 22px; padding-left: 8px; color: #444; width: 42px; }
.f-i { font-family: "Liberation Serif", serif; font-weight: bold; font-size: 24px; width: 30px; color: #555; }
.f-u { font-size: 20px; font-weight: 600; width: 30px; text-decoration: underline; text-underline-offset: 3px; }
.f-dd { width: 17px; }
.f-abc { font-size: 16px; text-decoration: line-through; width: 38px; letter-spacing: -.4px; padding-top: 2px; }
.f-x { font-size: 20px; font-weight: 600; width: 33px; display: block; line-height: 36px; }
.f-x sub, .f-x sup { font-size: 11px; color: #3a76b8; line-height: 0; margin-left: 1px; }
.f-x sup { vertical-align: 10px; }
.sep-b { margin-right: 12px; margin-left: -6px; }
.f-fx { font-size: 23px; width: 27px; color: #fff; -webkit-text-stroke: 1.2px #3f7fc8; font-weight: 600; text-shadow: 0 0 3px #a9cdf0; }
.f-dd2 { width: 18px; }
.f-hl { font-size: 15px; line-height: 16px; margin-left: -2px; }
.foot-font { margin-left: 159px; }
.styles { margin-left: auto; width: 334px; }
.gallery-wrap { display: flex; margin-top: 8px; height: 91px; }
.gallery { width: 294px; background: #fff; border: 1px solid #c6c6c6; border-right: 0; display: flex; }
.style { display: flex; flex-direction: column; color: #666; flex: none; }
.s1 { width: 85px; }
.s2 { width: 108px; }
.s3 { width: 100px; }
.sample { font: 24px/30px "Liberation Serif", serif; color: #000; margin-top: 17px; width: 91px; overflow: hidden; }
.s1 .sample { font-weight: bold; font-size: 28px; margin-left: -20px; }
.s2 .sample { font-weight: bold; }
.style-name { line-height: 26px; margin: 9px 0 0 4px; letter-spacing: .15px; }
.s1 .style-name { margin-left: -18px; }
.gal-scroll { width: 25px; }
.gal-scroll svg { box-shadow: inset 0 0 0 1px #b5b5b5; }
.styles .launch { margin-left: 317px; }
.editing { width: 124px; padding-left: 19px; }
.edit-list { padding-top: 4px; }
.edit-row { height: 34px; display: flex; align-items: center; }
.edit-row > svg:first-child, .ab-icon { width: 22px; margin-right: 3px; }
.ab-icon { font-size: 15px; line-height: 12px; font-weight: 600; color: #666; margin-left: -2px; margin-right: 5px; }
.ab-icon span { display: flex; align-items: center; letter-spacing: -.5px; }
.ab-icon em { font-style: normal; color: #9b5fc0; }
.ab-icon u { text-decoration: none; color: #3f76b5; }
.e-find { width: 49px; }
.e-rep { letter-spacing: -.3px; }
.e-sel { width: 52px; letter-spacing: -.2px; }
.foot-edit { margin-left: 18px; }
.collapse { margin: 122px 11px 0 92px; }

/* document area */
.doc { height: 750px; flex: none; background: #e6e6e6; overflow: hidden; padding-left: 335px; }
.page { width: 1224px; background: #fff; border: 1px solid #c6c6c6; }
.page-prev { height: 52px; border-top: 0; }
.page-cur { margin-top: 22px; height: 700px; padding: 144px 0 0 143px; font: 24px/29.6px "Liberation Serif", "Times New Roman", serif; color: #000; }
.line { display: flex; justify-content: space-between; width: 930px; height: 29.600px; }
.short { width: 906px; }
.head1 { margin-bottom: 16px; }
.head2 { margin-top: 17px; }

/* status bar */
.status { height: 33px; flex: none; border-top: 1px solid #c6c6c6; background: #f3f3f3; display: flex; align-items: center; font-size: 15px; color: #444; padding-left: 11px; }
.st-page { width: 122px; letter-spacing: .1px; padding-bottom: 2px; }
.st-words { width: 109px; letter-spacing: .15px; padding-bottom: 2px; }
.st-proof { margin-bottom: 2px; }
.st-right { margin-left: auto; display: flex; align-items: center; height: 32px; width: 445px; }
.view-btn { width: 60px; height: 32px; display: flex; justify-content: center; align-items: center; padding-bottom: 4px; }
.sel.view-btn { background: #c6c6c6; }
.minus { margin-left: 8px; margin-bottom: 1px; }
.slider { width: 148px; height: 2px; background: #ababab; margin: 0 8px; display: flex; align-items: center; margin-bottom: 1px; }
.thumb { width: 8px; height: 17px; background: #767676; margin-left: 70px; }
.plus { margin-bottom: 1px; }
.zoom { margin-left: 19px; padding-bottom: 2px; }

/* taskbar */
.taskbar { height: 60px; flex: none; display: flex; background: linear-gradient(90deg, #3a4041 0, #333a38 72px, #252c20 590px, #262b23 640px, #2f2b23 800px, #352b25 1000px, #332b25 1340px, #29261d 1370px, #3d3228 1540px, #352b26 1750px, #32282a 1920px); color: #fff; }
.start { width: 72px; display: flex; align-items: center; justify-content: center; }
.search { width: 516px; border: 2px solid #5c5c5c; background: #333; display: flex; align-items: center; padding-left: 16px; }
.search span { margin-left: 17px; font-size: 21px; letter-spacing: .2px; color: #e2e2e2; padding-top: 2px; }
.cell { width: 60px; display: flex; align-items: center; justify-content: center; }
.c72 { width: 72px; }
.c76 { width: 76px; padding-right: 4px; }
.run { background: linear-gradient(#b0dcfb, #b0dcfb) 7px 57px / 46px 3px no-repeat; }
.stack { background: linear-gradient(90deg, #b0dcfb 32px, #5f7a8c 32px 34px, #8fb2c8 34px) 7px 57px / 46px 3px no-repeat; }
.active { width: 57px; background: linear-gradient(90deg, #b0dcfb 50px, #5f7a8c 50px 52px, #8fb2c8 52px) 0 57px / 57px 3px no-repeat, linear-gradient(90deg, #5a524d 50px, #37302c 50px 52px, #544c47 52px); margin-right: 5px; padding-right: 7px; }
.chr2 { margin-left: 4px; margin-top: 4px; }
.dollar { font: bold 38px/38px "Liberation Sans", sans-serif; color: #f2bd12; text-shadow: 1px 1px 0 #8a5c00, -1px -1px 0 #ffe88a; }
.band-scroll { width: 26px; background: #f0f0f0; display: flex; flex-direction: column; align-items: center; justify-content: space-between; padding: 10px 0 9px; border-left: 1px solid #fff; }
.tray { width: 48px; display: flex; align-items: center; justify-content: center; }
.t72 { width: 72px; }
.t58 { width: 58px; }
.clock { width: 108px; display: flex; flex-direction: column; align-items: center; font-size: 17px; line-height: 28px; padding-top: 3px; }
.notif { position: relative; width: 70px; padding: 10px 0 0 2px; }
.notif b { position: absolute; left: 27px; top: 31px; font-size: 16px; line-height: 22px; }
.peek { width: 2px; background: #7c7673; }

/* fuzzy logic designer window */
.dialog { position: absolute; left: 538px; top: 68px; width: 842px; height: 718px; border: 1px solid #4a4a4a; border-bottom-color: #888; background: #fff; box-shadow: 0 4px 14px rgba(0,0,0,.5); display: flex; flex-direction: column; }
.d-title { height: 46px; flex: none; display: flex; align-items: center; padding-left: 12px; }
.d-name { margin-left: 5px; font-size: 17px; letter-spacing: .1px; color: #000; }
.d-btns { display: flex; align-items: center; gap: 55px; margin-left: auto; padding: 0 27px 1px 0; }
.d-menu { height: 39px; flex: none; border-top: 1px solid #d2d2d2; border-bottom: 1px solid #a5a5a5; display: flex; align-items: center; padding: 0 0 3px 12px; font-size: 17px; color: #222; }
.m1 { width: 52px; }
.m2 { width: 56px; }
.d-canvas { background: #e6e6e6; margin-top: 2px; }
.d-panel { flex: 1; background: #c0c0c0; border-top: 1px solid #111; border-left: 2px solid #111; padding: 8px 7px 0 7px; font: 16px/20px "Liberation Sans", Arial, sans-serif; color: #1c1c1c; display: flex; flex-direction: column; }
.frame { border: 1px solid #161616; box-shadow: inset 0 0 0 1px #8a8a8a; flex: none; }
.fis { height: 53px; display: flex; padding: 9px 0 0 8px; }
.f1 { width: 179px; letter-spacing: -.45px; }
.f2 { width: 286px; }
.f3 { width: 174px; }
.f4 { letter-spacing: -.15px; }
.mid { display: flex; margin-top: 8px; gap: 7px; height: 227px; }
.methods { width: 413px; padding: 8px 0 0 8px; }
.mrow { display: flex; height: 43.500px; }
.mrow > span { width: 226px; padding-top: 2px; }
.tight { letter-spacing: -.3px; }
.loose { letter-spacing: .2px; }
.mrow .sel { width: 165px; height: 33px; border: 1px solid #adadb5; display: flex; align-items: center; justify-content: space-between; padding-left: 9px; }
.sel > span { padding-top: 4px; }
.sel i { width: 23px; height: 31px; background: #e1e1e1; display: flex; align-items: center; justify-content: center; }
.right { flex: 1; display: flex; flex-direction: column; justify-content: space-between; }
.variable { height: 166px; padding: 10px 0 0 8px; }
.vrow { height: 37.700px; display: flex; }
.vrow > span:first-child { width: 219px; }
.field { width: 165px; height: 34px; border: 2px solid #b4b4bc; background: #fff; margin: -1px 0 0 -1px; padding: 6px 0 0 5px; }
.buttons { height: 53px; display: flex; padding: 8px 0 0 6px; gap: 53px; }
.btn { width: 166px; height: 35px; border: 2px solid; border-color: #f4f4f4 #808080 #808080 #f4f4f4; text-align: center; line-height: 33px; }
.ready { height: 53px; margin-top: 9px; padding: 9px 0 0 8px; }
```
